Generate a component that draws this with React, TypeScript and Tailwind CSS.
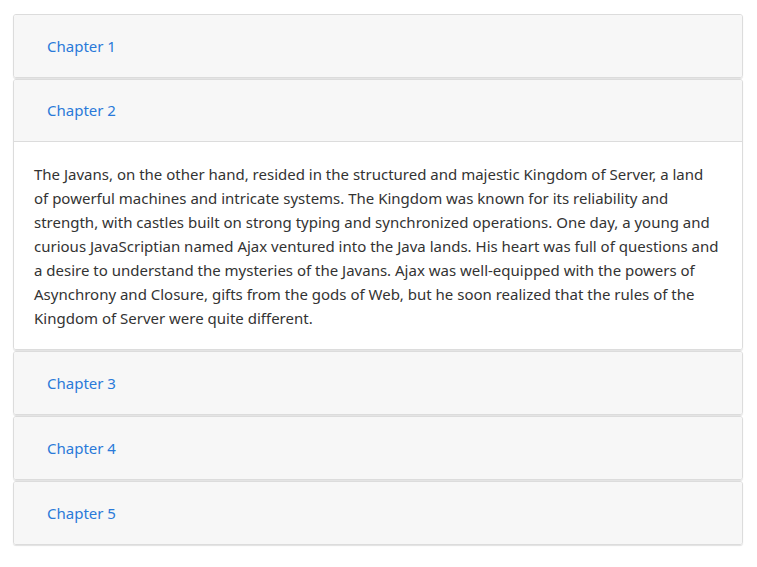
import React from 'react';

const LINES = [
  'The Javans, on the other hand, resided in the structured and majestic Kingdom of Server, a land',
  'of powerful machines and intricate systems. The Kingdom was known for its reliability and',
  'strength, with castles built on strong typing and synchronized operations. One day, a young and',
  'curious JavaScriptian named Ajax ventured into the Java lands. His heart was full of questions and',
  'a desire to understand the mysteries of the Javans. Ajax was well-equipped with the powers of',
  'Asynchrony and Closure, gifts from the gods of Web, but he soon realized that the rules of the',
  'Kingdom of Server were quite different.',
];

const chapters = ['Chapter 1', 'Chapter 2', 'Chapter 3', 'Chapter 4', 'Chapter 5'];

export default function App() {
  return (
    <div
      className="min-h-screen bg-white px-[13px] pt-[14px]"
      style={{ fontFamily: '"Noto Sans", "Open Sans", sans-serif' }}
    >
      <div className="flex w-[730px] flex-col gap-[1px]">
        {chapters.map((c, i) => (
          <div
            key={c}
            className="overflow-hidden rounded-[3px] border border-[#dcdcdc] shadow-[0_1px_1px_rgba(0,0,0,0.12)]"
          >
            <div
              className={`flex h-[62px] items-center bg-[#f7f7f7] pl-[33px] text-[15px] text-[#2a7ad9] ${
                i === 1 ? 'border-b border-[#dcdcdc]' : ''
              }`}
            >
              {c}
            </div>
            {i === 1 && (
              <div className="whitespace-nowrap bg-white px-[20px] pt-[20px] pb-[19px] text-[15px] leading-[24px] text-[#333333]">
                {LINES.map((l, j) => (
                  <div key={j}>{l}</div>
                ))}
              </div>
            )}
          </div>
        ))}
      </div>
    </div>
  );
}
